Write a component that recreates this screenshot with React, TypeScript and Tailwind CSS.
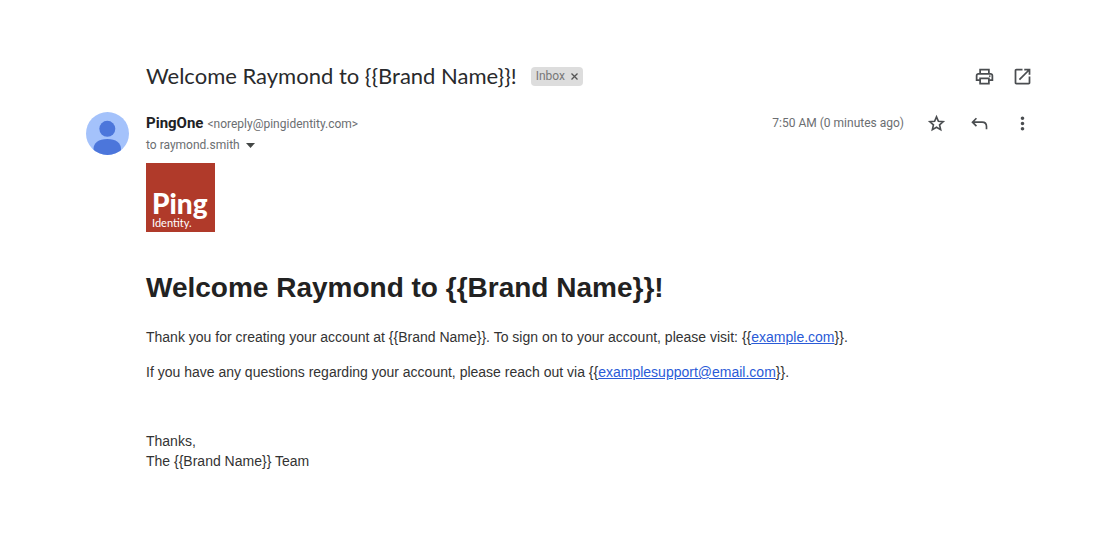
import type { ReactNode } from "react";

function Icon({ children, viewBox = "0 0 24 24" }: { children: ReactNode; viewBox?: string }) {
  return (
    <svg viewBox={viewBox} className="size-[21px]" fill="currentColor" aria-hidden="true">
      {children}
    </svg>
  );
}

function IconButton({ label, children }: { label: string; children: ReactNode }) {
  return (
    <button type="button" aria-label={label} className="shrink-0 cursor-pointer text-[#4a4d50]">
      {children}
    </button>
  );
}

function Avatar() {
  return (
    <svg viewBox="0 0 43 43" className="size-[43px] shrink-0" role="img" aria-label="PingOne">
      <defs>
        <clipPath id="avatar-clip">
          <circle cx="21.5" cy="21.5" r="21.5" />
        </clipPath>
      </defs>
      <g clipPath="url(#avatar-clip)">
        <rect width="43" height="43" fill="#a4c2fb" />
        <circle cx="21.3" cy="16.8" r="8" fill="#4c76db" />
        <path d="M7.500 43v-6c0-6 5-10 13.800-10S35 31 35 37v6z" fill="#4c76db" />
      </g>
    </svg>
  );
}

function PingLogo() {
  return (
    <div className="mt-[7px] flex size-[69px] flex-col justify-end bg-[#b03a2a] pb-[3px] pl-1.5 font-[Lato,sans-serif] text-white">
      <span className="text-[28px] leading-[26px] font-black">Ping</span>
      <span className="text-[11px] leading-[13px]">Identity.</span>
    </div>
  );
}

function Header() {
  return (
    <header className="flex items-center gap-[17px] pl-[60px]">
      <h1 className="flex grow items-center gap-3.5 font-[Lato,sans-serif] text-[22px] leading-7 text-[#292a2c]">
        Welcome Raymond to {"{{Brand Name}}"}!
        <span className="flex h-[19px] items-center gap-1.5 rounded bg-[#dddddd] px-[5px] font-[Roboto,sans-serif] text-xs text-[#777777]">
          Inbox
          <button type="button" aria-label="Remove label Inbox" className="cursor-pointer text-[#555555]">
            <svg viewBox="0 0 7 7" className="size-[7px]" fill="none" stroke="currentColor" strokeWidth="1.3" aria-hidden="true">
              <path d="M.5.5l6 6M6.500.5l-6 6" />
            </svg>
          </button>
        </span>
      </h1>
      <IconButton label="Print">
        <Icon>
          <path d="M19 8h-1V3H6v5H5c-1.660 0-3 1.340-3 3v6h4v4h12v-4h4v-6c0-1.660-1.340-3-3-3zM8 5h8v3H8V5zm8 12v2H8v-4h8v2zm2-2v-2H6v2H4v-4c0-.55.45-1 1-1h14c.55 0 1 .45 1 1v4h-2z" />
          <circle cx="18" cy="11.500" r="1" />
        </Icon>
      </IconButton>
      <IconButton label="Open in new window">
        <Icon>
          <path d="M19 19H5V5h7V3H5c-1.110 0-2 .9-2 2v14c0 1.100.89 2 2 2h14c1.100 0 2-.9 2-2v-7h-2v7zM14 3v2h3.590l-9.830 9.830 1.410 1.410L19 6.410V10h2V3h-7z" />
        </Icon>
      </IconButton>
    </header>
  );
}

function SenderRow() {
  return (
    <div className="flex items-center justify-between">
      <div className="flex items-baseline gap-1 font-[Roboto,sans-serif] leading-[22px]">
        <span className="text-[15px] font-bold text-[#202124]">PingOne</span>
        <span className="text-xs text-[#6b6e71]">&lt;noreply@pingidentity.com&gt;</span>
      </div>
      <div className="flex items-center gap-[22px]">
        <time className="font-[Roboto,sans-serif] text-xs text-[#6b6e71]">7:50 AM (0 minutes ago)</time>
        <IconButton label="Star">
          <Icon>
            <path
              d="M12 4.500l2.200 5 5.400.5-4.100 3.600 1.200 5.400-4.700-2.800L7.300 19l1.200-5.400L4.400 10l5.400-.5z"
              fill="none"
              stroke="currentColor"
              strokeWidth="1.900"
            />
          </Icon>
        </IconButton>
        <IconButton label="Reply">
          <Icon>
            <path d="M8.500 6L4 10.500 8.500 15M4 10.500h11q5 0 5 5V18.500" fill="none" stroke="currentColor" strokeWidth="1.900" />
          </Icon>
        </IconButton>
        <IconButton label="More">
          <Icon>
            <path d="M12 8c1.100 0 2-.9 2-2s-.9-2-2-2-2 .9-2 2 .9 2 2 2zm0 2c-1.100 0-2 .9-2 2s.9 2 2 2 2-.9 2-2-.9-2-2-2zm0 6c-1.100 0-2 .9-2 2s.9 2 2 2 2-.9 2-2-.9-2-2-2z" />
          </Icon>
        </IconButton>
      </div>
    </div>
  );
}

export default function App() {
  return (
    <main className="min-h-screen bg-white pt-[62px] pr-[87px] pb-20 pl-[86px]">
      <Header />
      <article className="mt-[22px] flex gap-[17px]">
        <Avatar />
        <div className="min-w-0 grow">
          <SenderRow />
          <button type="button" className="flex cursor-pointer items-center gap-1.5 font-[Roboto,sans-serif] text-xs leading-[22px] text-[#6b6e71]">
            to raymond.smith
            <svg viewBox="0 0 9 5" className="h-[5px] w-[9px] text-[#444746]" fill="currentColor" aria-hidden="true">
              <path d="M0 0h9L4.500 5z" />
            </svg>
          </button>
          <PingLogo />
          <div className="font-['Liberation_Sans',Arial,sans-serif] text-[14px] leading-5 text-[#333333]">
            <h2 className="mt-9 text-[28px] leading-10 font-bold text-[#222222]">
              Welcome Raymond to {"{{Brand Name}}"}!
            </h2>
            <p className="mt-[19px]">
              Thank you for creating your account at {"{{Brand Name}}"}. To sign on to your account, please visit: {"{{"}
              <a href="https://example.com" className="text-[#2a5bd7] underline">example.com</a>
              {"}}"}.
            </p>
            <p className="mt-[15px]">
              If you have any questions regarding your account, please reach out via {"{{"}
              <a href="mailto:examplesupport@email.com" className="text-[#2a5bd7] underline">examplesupport@email.com</a>
              {"}}"}.
            </p>
            <p className="mt-[49px]">
              Thanks,
              <br />
              The {"{{Brand Name}}"} Team
            </p>
          </div>
        </div>
      </article>
    </main>
  );
}
